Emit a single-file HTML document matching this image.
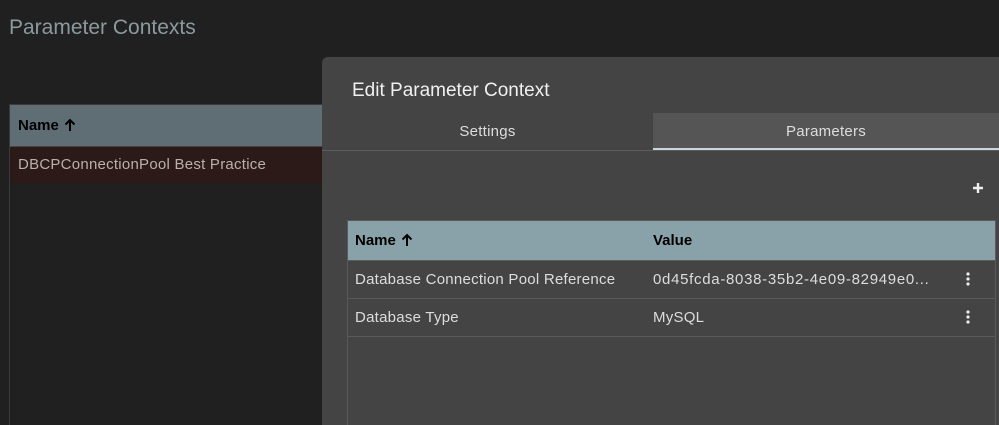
<!DOCTYPE html><html><head><style>
html,body{margin:0;width:999px;height:425px;overflow:hidden}
body{background:#202020;font-family:"Liberation Sans",sans-serif;position:relative}
.a{position:absolute;white-space:nowrap}
.t{font-size:15px;letter-spacing:0.25px}
</style></head><body>
<div class="a" style="left:9px;top:16px;font-size:21px;color:#8c9a9f">Parameter Contexts</div>
<div class="a" style="left:9px;top:104px;width:330px;height:321px;border:1px solid #3a3a3a;border-bottom:none;background:#202020;box-sizing:border-box"></div>
<div class="a" style="left:10px;top:105px;width:330px;height:41px;background:#5f6e75;border-bottom:1px solid #444"></div>
<div class="a" style="left:18px;top:117px;font-size:15px;color:#000;font-weight:bold">Name</div>
<svg class="a" style="left:64px;top:118px" width="12" height="14"><path d="M6 13V2M1.5 6.5L6 2l4.5 4.5" stroke="#000" stroke-width="2" fill="none"/></svg>
<div class="a" style="left:10px;top:147px;width:330px;height:36px;background:#2c1a18"></div>
<div class="a t" style="left:18px;top:156px;color:#b9b0ae">DBCPConnectionPool Best Practice</div>
<div class="a" style="left:322px;top:57px;width:677px;height:368px;background:#444;border-radius:6px 0 0 0"></div>
<div class="a" style="left:352px;top:80px;font-size:19px;color:#f0f0f0">Edit Parameter Context</div>
<div class="a" style="left:322px;top:150px;width:677px;height:1px;background:#5c5c5c"></div>
<div class="a t" style="left:322px;top:123px;width:331px;text-align:center;color:#ddd">Settings</div>
<div class="a" style="left:653px;top:113px;width:346px;height:35px;background:#555;border-bottom:2px solid #c8d6dc"></div>
<div class="a t" style="left:653px;top:123px;width:346px;text-align:center;color:#ddd">Parameters</div>
<svg class="a" style="left:972px;top:182px" width="12" height="12"><path d="M6 1v10M1 6h10" stroke="#eee" stroke-width="2.4"/></svg>
<div class="a" style="left:347px;top:220px;width:649px;height:205px;border:1px solid #5a5a5a;border-bottom:none;box-sizing:border-box"></div>
<div class="a" style="left:348px;top:221px;width:647px;height:39px;background:#89a2aa;border-bottom:1px solid #5a5a5a"></div>
<div class="a" style="left:355px;top:232px;font-size:15px;font-weight:bold;color:#000">Name</div>
<svg class="a" style="left:401px;top:233px" width="12" height="14"><path d="M6 13V2M1.5 6.5L6 2l4.5 4.5" stroke="#000" stroke-width="2" fill="none"/></svg>
<div class="a" style="left:653px;top:232px;font-size:15px;font-weight:bold;color:#000">Value</div>
<div class="a" style="left:348px;top:298px;width:647px;height:1px;background:#5a5a5a"></div>
<div class="a" style="left:348px;top:336px;width:647px;height:1px;background:#5a5a5a"></div>
<div class="a t" style="left:355px;top:271px;color:#ddd">Database Connection Pool Reference</div>
<div class="a t" style="left:653px;top:271px;color:#ddd;letter-spacing:0.7px">0d45fcda-8038-35b2-4e09-82949e0...</div>
<div class="a t" style="left:355px;top:309px;color:#ddd">Database Type</div>
<div class="a t" style="left:653px;top:309px;color:#ddd">MySQL</div>
<svg class="a" style="left:964px;top:272px" width="8" height="14"><circle cx="4" cy="2" r="1.6" fill="#eee"/><circle cx="4" cy="7" r="1.6" fill="#eee"/><circle cx="4" cy="12" r="1.6" fill="#eee"/></svg>
<svg class="a" style="left:964px;top:310px" width="8" height="14"><circle cx="4" cy="2" r="1.6" fill="#eee"/><circle cx="4" cy="7" r="1.6" fill="#eee"/><circle cx="4" cy="12" r="1.6" fill="#eee"/></svg>
</body></html>
